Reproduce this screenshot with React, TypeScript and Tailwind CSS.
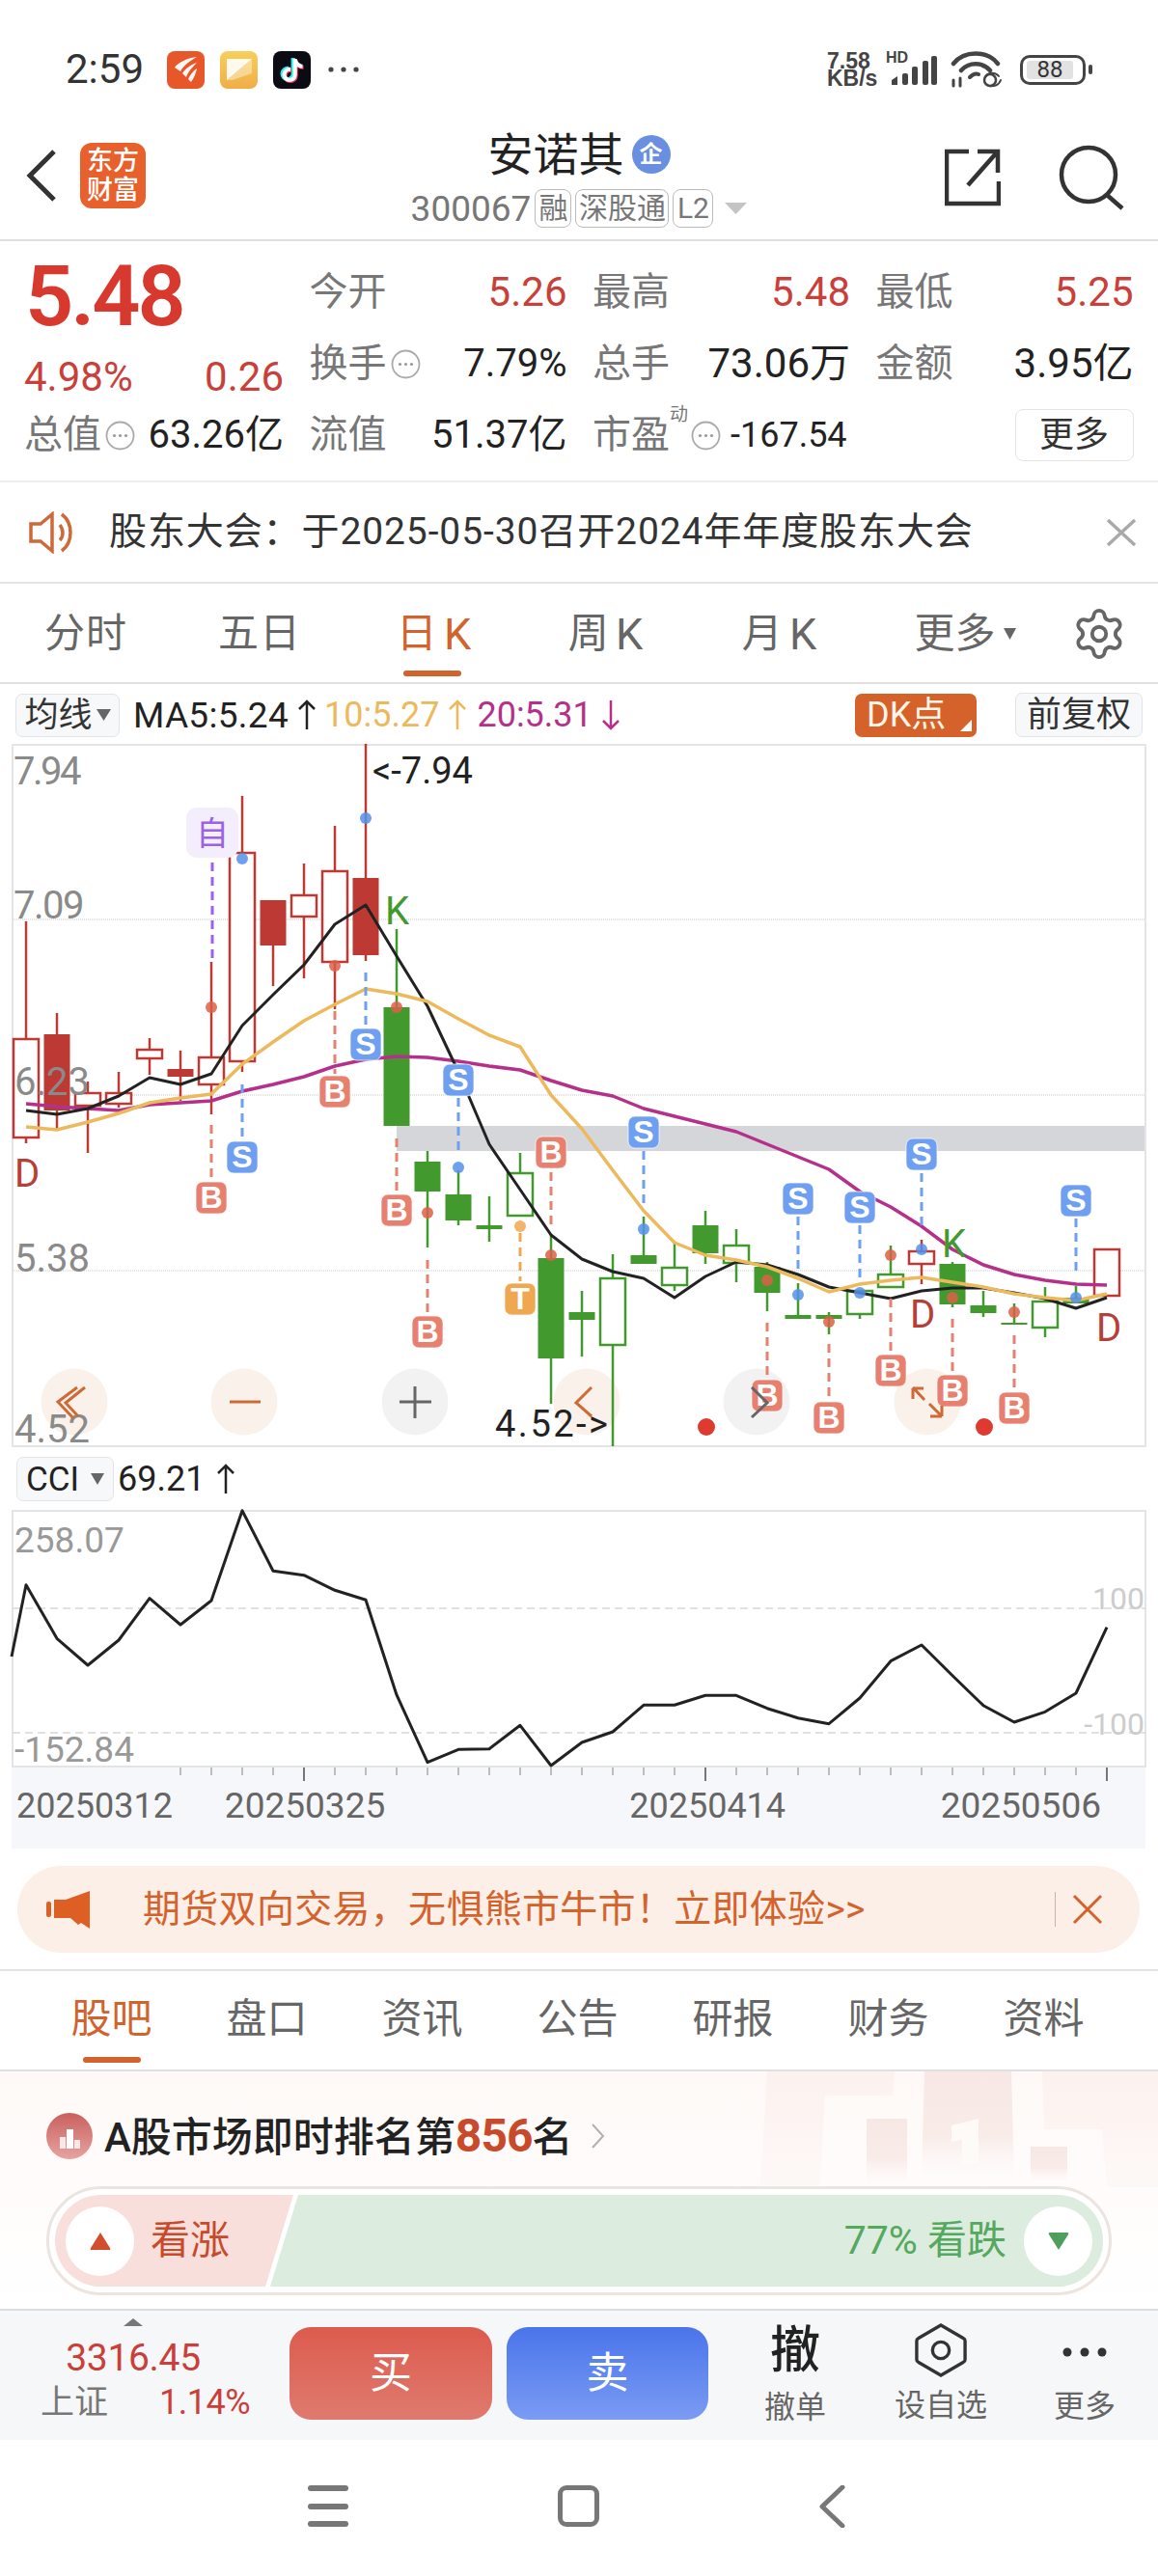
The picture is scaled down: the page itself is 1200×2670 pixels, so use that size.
import React from "react";
import { Settings } from "lucide-react";
import { FaTiktok } from "react-icons/fa6";

const RED = "#bd3a34";
const GREEN = "#429a2e";
const X = (i: number) => 27 + 32 * i;

type C = [number, "h" | "s", "r" | "g", number, number, number, number];
const candles: C[] = [
  [0, "h", "r", 957, 1079, 1181, 1187],
  [1, "s", "r", 1052, 1074, 1153, 1173],
  [2, "h", "r", 1123, 1135, 1148, 1197],
  [3, "h", "r", 1113, 1135, 1146, 1150],
  [4, "h", "r", 1078, 1090, 1099, 1116],
  [5, "s", "r", 1091, 1110, 1118, 1143],
  [6, "h", "r", 999, 1098, 1126, 1157],
  [7, "h", "r", 827, 886, 1102, 1113],
  [8, "s", "r", 935, 935, 982, 1024],
  [9, "h", "r", 897, 930, 952, 1016],
  [10, "h", "r", 858, 905, 999, 1048],
  [11, "s", "r", 773, 912, 992, 998],
  [12, "s", "g", 965, 1046, 1169, 1169],
  [13, "s", "g", 1195, 1206, 1237, 1295],
  [14, "s", "g", 1215, 1240, 1267, 1272],
  [15, "s", "g", 1242, 1272, 1276, 1289],
  [16, "h", "g", 1197, 1218, 1262, 1262],
  [17, "s", "g", 1282, 1306, 1410, 1457],
  [18, "s", "g", 1340, 1362, 1370, 1408],
  [19, "h", "g", 1302, 1327, 1396, 1501],
  [20, "s", "g", 1263, 1303, 1312, 1312],
  [21, "h", "g", 1290, 1316, 1334, 1340],
  [22, "s", "g", 1257, 1272, 1301, 1312],
  [23, "h", "g", 1276, 1293, 1311, 1331],
  [24, "s", "g", 1310, 1315, 1342, 1361],
  [25, "s", "g", 1332, 1365, 1369, 1369],
  [26, "s", "g", 1362, 1365, 1369, 1385],
  [27, "h", "g", 1340, 1340, 1364, 1369],
  [28, "h", "g", 1293, 1323, 1336, 1336],
  [29, "h", "r", 1287, 1299, 1312, 1333],
  [30, "s", "g", 1310, 1312, 1354, 1357],
  [31, "s", "g", 1340, 1355, 1363, 1367],
  [32, "s", "g", 1353, 1373, 1375, 1375],
  [33, "h", "g", 1336, 1351, 1378, 1388],
  [34, "s", "g", 1335, 1347, 1353, 1353],
  [35, "h", "r", 1297, 1297, 1345, 1345],
];

const ma5 = [1153, 1157, 1151, 1138, 1119, 1126, 1115, 1065, 1033, 1002, 960, 940, 993, 1045, 1113, 1188, 1235, 1282, 1307, 1320, 1327, 1347, 1325, 1310, 1313, 1323, 1336, 1342, 1348, 1340, 1337, 1337, 1342, 1348, 1358, 1347];
const ma10 = [1170, 1173, 1165, 1156, 1145, 1140, 1136, 1105, 1082, 1060, 1043, 1027, 1032, 1040, 1058, 1075, 1087, 1137, 1172, 1215, 1257, 1290, 1303, 1308, 1315, 1327, 1341, 1333, 1329, 1326, 1331, 1336, 1343, 1347, 1350, 1343];
const ma20 = [1146, 1149, 1151, 1153, 1147, 1145, 1143, 1133, 1126, 1118, 1107, 1100, 1097, 1098, 1102, 1107, 1111, 1122, 1132, 1138, 1151, 1159, 1167, 1175, 1188, 1201, 1214, 1237, 1253, 1273, 1297, 1313, 1323, 1329, 1333, 1334];
const pts = (a: number[]) => a.map((y, i) => `${X(i)},${y}`).join(" ");

const cciZ = [428, 595, 678, 600, 470, 552, 477, 197, 385, 398, 445, 475, 770, 980, 940, 938, 865, 990, 918, 885, 802, 802, 772, 772, 812, 842, 860, 780, 665, 615, 710, 803, 855, 823, 765, 560];
const cciPts = "12,1717 " + cciZ.map((z, i) => `${X(i)},${(1500 + z / 3).toFixed(1)}`).join(" ");

type M = { i: number; l: "B" | "S" | "T"; top: number; from: number; to: number; dot?: number };
const markers: M[] = [
  { i: 6, l: "B", top: 1227, from: 1168, to: 1225, dot: 1046 },
  { i: 7, l: "S", top: 1185, from: 1126, to: 1183, dot: 892 },
  { i: 10, l: "B", top: 1117, from: 1050, to: 1115, dot: 1003 },
  { i: 11, l: "S", top: 1068, from: 1010, to: 1066, dot: 850 },
  { i: 12, l: "B", top: 1240, from: 1182, to: 1238, dot: 1046 },
  { i: 13, l: "B", top: 1366, from: 1308, to: 1364, dot: 1259 },
  { i: 14, l: "S", top: 1105, from: 1140, to: 1195, dot: 1212 },
  { i: 16, l: "T", top: 1332, from: 1280, to: 1330, dot: 1273 },
  { i: 17, l: "B", top: 1180, from: 1217, to: 1272, dot: 1303 },
  { i: 20, l: "S", top: 1159, from: 1195, to: 1252, dot: 1276 },
  { i: 24, l: "B", top: 1432, from: 1373, to: 1430, dot: 1329 },
  { i: 25, l: "S", top: 1228, from: 1263, to: 1320, dot: 1344 },
  { i: 26, l: "B", top: 1455, from: 1395, to: 1452, dot: 1372 },
  { i: 27, l: "S", top: 1237, from: 1272, to: 1328, dot: 1342 },
  { i: 28, l: "B", top: 1406, from: 1348, to: 1404, dot: 1303 },
  { i: 29, l: "S", top: 1182, from: 1218, to: 1273, dot: 1297 },
  { i: 30, l: "B", top: 1427, from: 1369, to: 1425, dot: 1347 },
  { i: 32, l: "B", top: 1445, from: 1386, to: 1442, dot: 1362 },
  { i: 34, l: "S", top: 1230, from: 1265, to: 1320, dot: 1347 },
];
const mFill = { B: "#e8806f", S: "#6f9ff0", T: "#f0a850" };
const dotFill = { B: "#dd5f47", S: "#5590ea", T: "#f0a850" };

function Candle({ c }: { c: C }) {
  const [i, t, col, wt, bt, bb, wb] = c;
  const color = col === "r" ? RED : GREEN;
  const x = X(i);
  return (
    <g>
      {wt < bt && <line x1={x} x2={x} y1={wt} y2={bt} stroke={color} strokeWidth={2.5} />}
      {wb > bb && <line x1={x} x2={x} y1={bb} y2={wb} stroke={color} strokeWidth={2.5} />}
      {t === "s" ? (
        <rect x={x - 13.5} y={bt} width={27} height={bb - bt} fill={color} />
      ) : (
        <rect x={x - 13} y={bt} width={26} height={bb - bt} fill="#fff" stroke={color} strokeWidth={2.5} />
      )}
    </g>
  );
}

function MainChart() {
  const grid = [955, 1137, 1319];
  const circles: [number, string][] = [
    [77, "#faf1ea"],
    [253, "#faf1ea"],
    [430, "#f2f2f2"],
    [608, "#faf1ea"],
    [784, "#f2f2f2"],
    [961, "#faf1ea"],
  ];
  return (
    <svg width={1200} height={730} viewBox="0 773 1200 730" className="block overflow-visible">
      <rect x={13} y={774} width={1174} height={727} fill="#fff" stroke="#e3e4e6" strokeWidth={2} />
      {grid.map((y) => (
        <line key={y} x1={13} x2={1187} y1={y} y2={y} stroke="#c9c9c9" strokeWidth={1} strokeDasharray="1 1" />
      ))}
      <rect x={411} y={1169} width={775} height={26} fill="#d5d6da" />
      {circles.map(([x, f]) => (
        <ellipse key={x} cx={x} cy={1455} rx={34.5} ry={34.5} fill={f} />
      ))}
      {candles.map((c) => (
        <Candle key={c[0]} c={c} />
      ))}
      <polyline points={pts(ma20)} fill="none" stroke="#b5308a" strokeWidth={3.5} strokeLinejoin="round" />
      <polyline points={pts(ma5)} fill="none" stroke="#222" strokeWidth={3} strokeLinejoin="round" />
      <polyline points={pts(ma10)} fill="none" stroke="#ecb95c" strokeWidth={3.5} strokeLinejoin="round" />
      <g fill="#8a8a8a" fontSize={40}>
        <text x={14} y={815} letterSpacing={-2.5}>7.94</text>
        <text x={14} y={954} letterSpacing={-1.5}>7.09</text>
        <text x={15} y={1137}>6.23</text>
        <text x={15} y={1320}>5.38</text>
        <text x={15} y={1497}>4.52</text>
      </g>
      <text x={386} y={814} fontSize={38} fill="#222">{"<-7.94"}</text>
      <text x={513} y={1491} fontSize={38} fill="#222" letterSpacing={2.5}>{"4.52->"}</text>
      <g fontSize={40} fill="#b5403a">
        <text x={15} y={1232}>D</text>
        <text x={943} y={1378}>D</text>
        <text x={1136} y={1392}>D</text>
      </g>
      <g fontSize={40} fill={GREEN}>
        <text x={399} y={960}>K</text>
        <text x={976} y={1305}>K</text>
      </g>
      <line x1={220} x2={220} y1={896} y2={1000} stroke="#9a63e6" strokeWidth={3} strokeDasharray="9 6" />
      <rect x={193} y={839} width={54} height={52} rx={11} fill="#f3edfc" />
      <text x={220} y={878} fontSize={34} fill="#9a63e6" textAnchor="middle">自</text>
      {markers.map((m) => {
        const x = X(m.i);
        return (
          <g key={m.i}>
            <line x1={x} x2={x} y1={m.from} y2={m.to} stroke={mFill[m.l]} strokeWidth={3} strokeDasharray="9 6" />
            {m.dot && <circle cx={x} cy={m.dot} r={6} fill={dotFill[m.l]} fillOpacity={0.85} />}
            <rect x={x - 16} y={m.top} width={32} height={33} rx={7} fill={mFill[m.l]} stroke="#fff" strokeOpacity={0.7} />
            <text x={x} y={m.top + 27} fontSize={32} fontWeight={700} fill="#fff" textAnchor="middle" style={{ fontFamily: "'Liberation Sans', sans-serif" }}>
              {m.l}
            </text>
          </g>
        );
      })}
      <circle cx={732} cy={1481} r={9} fill="#de3a2f" />
      <circle cx={1020} cy={1481} r={9} fill="#de3a2f" />
      <g fill="none" strokeWidth={3}>
        <path d="M80 1440 L60 1455 L76 1472 M88 1440 L68 1456 L81 1470" stroke="#cf6a36" />
        <path d="M238 1455 H270" stroke="#cf6a36" />
        <path d="M414 1455 H447 M430 1439 V1472" stroke="#666" />
        <path d="M613 1440 L597 1456 L613 1470" stroke="#cf6a36" />
        <path d="M779 1440 L795 1456 L779 1471" stroke="#666" />
        <path d="M946 1440 L958 1453 M946 1441 V1452 M946 1441 H957 M963 1457 L976 1470 M976 1470 V1459 M976 1470 H964" stroke="#cf6a36" />
      </g>
    </svg>
  );
}

function CciChart() {
  return (
    <svg width={1200} height={267} viewBox="0 1565 1200 267" className="block absolute left-0 top-0 overflow-visible">
      <rect x={13} y={1566} width={1174} height={265} fill="#fff" stroke="#e3e4e6" strokeWidth={2} />
      <line x1={13} x2={1187} y1={1667} y2={1667} stroke="#d8d8d8" strokeWidth={1.5} strokeDasharray="8 5" />
      <line x1={13} x2={1187} y1={1796} y2={1796} stroke="#d8d8d8" strokeWidth={1.5} strokeDasharray="8 5" />
      <text x={15} y={1609} fontSize={37} fill="#999">258.07</text>
      <text x={15} y={1826} fontSize={37} fill="#999">-152.84</text>
      <text x={1186} y={1668} fontSize={32} fill="#ccc" textAnchor="end">100</text>
      <text x={1186} y={1798} fontSize={32} fill="#ccc" textAnchor="end">-100</text>
      <polyline points={cciPts} fill="none" stroke="#222" strokeWidth={3} strokeLinejoin="round" />
    </svg>
  );
}

const Dots = () => (
  <svg width={31} height={31} viewBox="0 0 31 31" className="shrink-0">
    <circle cx={15.5} cy={15.5} r={14} fill="none" stroke="#aaa" strokeWidth={1.8} />
    <g fill="#999">
      <circle cx={9.5} cy={15.5} r={1.6} />
      <circle cx={15.5} cy={15.5} r={1.6} />
      <circle cx={21.5} cy={15.5} r={1.6} />
    </g>
  </svg>
);

const Arrow = ({ color, down }: { color: string; down?: boolean }) => (
  <svg width={20} height={32} viewBox="0 0 20 32" className="shrink-0" style={{ transform: down ? "scaleY(-1)" : undefined }}>
    <path d="M10 31 V2 M2 10 L10 2 L18 10" fill="none" stroke={color} strokeWidth={2.5} />
  </svg>
);

const Tri = ({ w = 14, h = 14, color = "#666" }: { w?: number; h?: number; color?: string }) => (
  <svg width={w} height={h} viewBox="0 0 14 14" preserveAspectRatio="none" className="shrink-0">
    <path d="M0 1 H14 L7 13 Z" fill={color} />
  </svg>
);

const labelCls = "text-[40px] text-[#777] leading-none";
const redVal = "text-[42px] text-[#c93f3a] leading-none";
const darkVal = "text-[42px] text-[#222] leading-none";

function KV({ label, value, red, dots, valCls }: { label: string; value: string; red?: boolean; dots?: boolean; valCls?: string }) {
  return (
    <div className="flex items-center justify-between">
      <div className="flex items-center gap-[4px]">
        <span className={labelCls}>{label}</span>
        {dots && <Dots />}
      </div>
      <span className={valCls ?? (red ? redVal : darkVal)}>{value}</span>
    </div>
  );
}

const Tag = ({ children, w }: { children: React.ReactNode; w: string }) => (
  <span className={`${w} h-[40px] border border-[#bbb] rounded-[8px] flex items-center justify-center text-[30px] leading-none text-[#777] whitespace-nowrap`}>{children}</span>
);

function StatusBar() {
  return (
    <div className="h-[100px] shrink-0 flex items-center justify-between pl-[68px] pr-[68px] pt-[44px]">
      <div className="flex items-center">
        <span className="text-[42px] leading-none text-[#333] w-[105px]">2:59</span>
        <div className="w-[39px] h-[39px] rounded-[8px] bg-[#e8572a] flex items-center justify-center">
          <svg width={26} height={28} viewBox="0 0 26 28">
            <path d="M24 1 C15 2 5 6 1 12 L7 16 C10 10 17 5 24 1 Z M24 7 C18 9 12 13 9 18 L13 22 C15 16 20 11 24 7 Z M24 13 C21 15 17 19 15 24 L18 27 C21 23 23 18 24 13 Z" fill="#fff" fillOpacity={0.95} />
          </svg>
        </div>
        <div className="ml-[16px] w-[39px] h-[39px] rounded-[8px] bg-gradient-to-b from-[#f8cf5b] to-[#f0ae46] flex items-center justify-center">
          <svg width={26} height={22} viewBox="0 0 26 22">
            <path d="M0 0 H26 L0 22 Z" fill="#fff" fillOpacity={0.9} />
            <path d="M26 0 V15 L6 22 H0 Z" fill="#fff" fillOpacity={0.4} />
          </svg>
        </div>
        <div className="ml-[16px] w-[39px] h-[39px] rounded-[8px] bg-[#0b0b14] relative flex items-center justify-center">
          <FaTiktok size={24} color="#25f4ee" className="absolute left-[6px] top-[7px]" />
          <FaTiktok size={24} color="#fe2c55" className="absolute left-[9px] top-[9px]" />
          <FaTiktok size={24} color="#fff" className="absolute left-[7.5px] top-[8px]" />
        </div>
        <svg width={36} height={8} viewBox="0 0 36 8" className="ml-[17px]">
          <g fill="#444">
            <circle cx={4} cy={4} r={2.6} />
            <circle cx={17} cy={4} r={2.6} />
            <circle cx={30} cy={4} r={2.6} />
          </g>
        </svg>
      </div>
      <div className="flex items-center">
        <div className="w-[52px] text-[23px] leading-[18px] font-bold text-[#444] font-['Liberation_Sans',sans-serif]">
          7.58<br />KB/s
        </div>
        <div className="relative w-[52px] h-[36px] ml-[9px]">
          <span className="absolute left-0 top-[-2px] text-[16px] leading-none font-bold text-[#444] font-['Liberation_Sans',sans-serif]">HD</span>
          <svg width={48} height={31} viewBox="0 0 48 31" className="absolute left-[5px] top-[4px]">
            <g fill="#444">
              <path d="M1 30 V25 L7 21 V30 Z" />
              <rect x={12} y={18} width={6} height={12} rx={2} />
              <rect x={22} y={11} width={6} height={19} rx={2} />
              <rect x={33} y={5} width={6} height={25} rx={2} />
              <rect x={42} y={0} width={6} height={30} rx={2} />
            </g>
          </svg>
        </div>
        <svg width={54} height={38} viewBox="0 0 54 38" className="ml-[15px]">
          <g fill="none" stroke="#444" strokeLinecap="round">
            <path d="M3 13 C14 -1 38 -1 49 13" strokeWidth={4.5} />
            <path d="M11 20 C19 11 33 11 41 20" strokeWidth={4.5} />
            <path d="M20 27 C24 23 27 23 29 24" strokeWidth={4} />
            <circle cx={41} cy={30} r={6} strokeWidth={2.5} />
            <path d="M36 27 C38 22 46 21 50 26 M52 30 C50 36 44 37 40 36" strokeWidth={2} />
            <path d="M3 30 V36 M10 28 V36" strokeWidth={3} />
          </g>
        </svg>
        <div className="ml-[18px] w-[68px] h-[31px] border-[3px] border-[#444] rounded-[10px] flex items-center pl-[4px] py-[3px]">
          <div className="w-[48px] h-full rounded-[3px] bg-[#e2e2e2] flex items-center justify-center text-[24px] leading-none text-[#333]">88</div>
        </div>
        <div className="ml-[3px] w-[4px] h-[10px] rounded-[2px] bg-[#444]" />
      </div>
    </div>
  );
}

function Header() {
  return (
    <div className="h-[150px] shrink-0 flex items-start justify-between border-b-2 border-[#dedede]">
      <div className="w-[250px] flex items-center pt-[48px] pl-[27px]">
        <svg width={32} height={56} viewBox="0 0 32 56">
          <path d="M29 3 L4 28 L29 53" fill="none" stroke="#333" strokeWidth={5} />
        </svg>
        <div className="ml-[24px] w-[68px] h-[68px] rounded-[12px] bg-[#e8602c] flex flex-col items-center justify-center text-white text-[27px] leading-[30px] font-medium">
          <span>东方</span>
          <span>财富</span>
        </div>
      </div>
      <div className="flex flex-col items-center pt-[36px]">
        <div className="flex items-center h-[48px]">
          <span className="text-[47px] leading-none text-[#222]">安诺其</span>
          <span className="ml-[8px] w-[40px] h-[40px] rounded-full bg-[#6a8fe0] text-white text-[24px] leading-none font-bold flex items-center justify-center">企</span>
        </div>
        <div className="flex items-center mt-[12px] gap-[4px]">
          <span className="text-[37px] leading-none text-[#777]">300067</span>
          <Tag w="w-[38px]">融</Tag>
          <Tag w="w-[97px]">深股通</Tag>
          <Tag w="w-[42px]">L2</Tag>
          <span className="ml-[8px]"><Tri w={23} h={14} color="#c4c4c4" /></span>
        </div>
      </div>
      <div className="w-[250px] flex items-center justify-end pt-[50px] pr-[33px] gap-[60px]">
        <svg width={58} height={60} viewBox="0 0 58 60">
          <g fill="none" stroke="#333" strokeWidth={4.5}>
            <path d="M25 3 H2 V57 H56 V34" />
            <path d="M24 38 L54 4 M34 3 H55 V25" />
          </g>
        </svg>
        <svg width={70} height={68} viewBox="0 0 70 68">
          <g fill="none" stroke="#333" strokeWidth={4.5}>
            <circle cx={31} cy={31} r={28} />
            <path d="M50 52 L66 66" />
          </g>
        </svg>
      </div>
    </div>
  );
}

function Quote() {
  return (
    <div className="h-[250px] shrink-0 border-b-2 border-[#eee] pt-[16px] pl-[25px] grid grid-cols-[269px_267px_267px_267px] grid-rows-[74px_74px_74px] gap-x-[26.5px]">
      <div className="row-span-2 flex flex-col">
        <span className="text-[88px] leading-none font-semibold text-[#d8392f] tracking-[-3px] mt-[-3px] ml-[1px]">5.48</span>
        <div className="flex justify-between mt-[19px] text-[42px] leading-none text-[#c93f3a]">
          <span>4.98%</span>
          <span>0.26</span>
        </div>
      </div>
      <KV label="今开" value="5.26" red />
      <KV label="最高" value="5.48" red />
      <KV label="最低" value="5.25" red />
      <KV label="换手" value="7.79%" dots valCls="text-[40px] text-[#222] leading-none" />
      <KV label="总手" value="73.06万" />
      <KV label="金额" value="3.95亿" />
      <KV label="总值" value="63.26亿" dots valCls="text-[40px] text-[#222] leading-none" />
      <KV label="流值" value="51.37亿" valCls="text-[40px] text-[#222] leading-none" />
      <div className="flex items-center relative">
        <span className={labelCls}>市盈</span>
        <span className="text-[19px] text-[#777] leading-none self-start mt-[6px] w-[22px]">动</span>
        <Dots />
        <span className="ml-[10px] text-[36px] text-[#222] leading-none">-167.54</span>
      </div>
      <div className="flex items-center justify-end">
        <div className="w-[123px] h-[54px] border border-[#e4e4e4] rounded-[8px] flex items-center justify-center text-[36px] leading-none text-[#333]">更多</div>
      </div>
    </div>
  );
}

function Notice() {
  return (
    <div className="h-[105px] shrink-0 border-b-2 border-[#e4e4e4] flex items-center pl-[30px] pr-[22px]">
      <svg width={52} height={44} viewBox="0 0 52 44" className="shrink-0">
        <g fill="none" stroke="#cd6a3a" strokeWidth={3.5}>
          <path d="M2 13 H12 L24 3 V41 L12 31 H2 Z" />
          <path d="M32 14 C36 19 36 26 32 30" />
          <path d="M34 3 C46 12 46 32 34 41" />
        </g>
      </svg>
      <span className="ml-[31px] text-[39px] tracking-[0.9px] leading-none text-[#333] whitespace-nowrap">股东大会：于2025-05-30召开2024年年度股东大会</span>
      <svg width={32} height={30} viewBox="0 0 32 30" className="ml-auto">
        <path d="M2 2 L30 28 M30 2 L2 28" fill="none" stroke="#a9a9a9" strokeWidth={3.5} />
      </svg>
    </div>
  );
}

const KTab = ({ w, active, children }: { w: string; active?: boolean; children: React.ReactNode }) => (
  <div className={`${w} relative flex items-center justify-center text-[42px] leading-none tracking-[1px] pt-[2px] ${active ? "text-[#d1632c]" : "text-[#666]"}`}>
    {children}
    {active && <div className="absolute bottom-[6px] left-[58px] w-[60px] h-[6px] rounded-[3px] bg-[#d1632c]" />}
  </div>
);
const K = () => <span className="ml-[6px] text-[45px]">K</span>;

function KTabs() {
  return (
    <div className="h-[104px] shrink-0 border-b-2 border-[#e0e0e0] flex items-stretch">
      <KTab w="w-[178px]">分时</KTab>
      <KTab w="w-[182px]">五日</KTab>
      <KTab w="w-[180px]" active>日<K /></KTab>
      <KTab w="w-[176px]">周<K /></KTab>
      <KTab w="w-[184px]">月<K /></KTab>
      <div className="w-[200px] flex items-center justify-center gap-[8px] text-[42px] leading-none text-[#666] pt-[2px]">
        更多
        <Tri w={13} h={14} />
      </div>
      <div className="w-[78px] flex items-center justify-center pt-[1px]">
        <Settings size={58} color="#666" strokeWidth={1.6} />
      </div>
    </div>
  );
}

function Ma() {
  return (
    <div className="h-[62px] shrink-0 flex items-center pl-[16px] pr-[16px] pt-[2px]">
      <div className="w-[108px] h-[45px] bg-[#f7f8fa] border border-[#e3e4e8] rounded-[7px] flex items-center justify-center gap-[4px] text-[35px] leading-none text-[#333]">
        均线
        <Tri w={15} h={14} />
      </div>
      <span className="ml-[14px] text-[37px] tracking-[0.3px] leading-none text-[#222]">MA5:5.24</span>
      <span className="ml-[9px]"><Arrow color="#222" /></span>
      <span className="ml-[8px] text-[36px] leading-none text-[#ecb95c]">10:5.27</span>
      <span className="ml-[9px]"><Arrow color="#ecb95c" /></span>
      <span className="ml-[10px] text-[36px] leading-none text-[#b5308a]">20:5.31</span>
      <span className="ml-[9px]"><Arrow color="#b5308a" down /></span>
      <div className="ml-auto w-[126px] h-[45px] rounded-[7px] bg-[#d5622b] relative flex items-center pl-[12px] text-[36px] leading-none text-[#fff6ea]">
        DK点
        <svg width={12} height={12} viewBox="0 0 12 12" className="absolute right-[5px] bottom-[6px]">
          <path d="M0 12 L12 0 V12 Z" fill="#fff" />
        </svg>
      </div>
      <div className="ml-[40px] w-[132px] h-[46px] bg-[#f7f8fa] border border-[#e3e4e8] rounded-[7px] flex items-center justify-center text-[36px] leading-none text-[#333]">前复权</div>
    </div>
  );
}

function CciHead() {
  return (
    <div className="h-[64px] shrink-0 flex items-center pl-[17px]">
      <div className="w-[101px] h-[46px] bg-[#f7f8fa] border border-[#e3e4e8] rounded-[7px] flex items-center justify-center gap-[12px] text-[35px] leading-none text-[#222]">
        CCI
        <Tri w={14} h={14} />
      </div>
      <span className="ml-[4px] text-[36px] leading-none text-[#222]">69.21</span>
      <span className="ml-[12px]"><Arrow color="#222" /></span>
    </div>
  );
}

function Dates() {
  return (
    <div className="relative shrink-0 h-[351px]">
      <CciChart />
      <div className="absolute left-[12px] top-[267px] w-[1175px] h-[84px] bg-[#f6f7fa]" />
      <svg width={1200} height={20} viewBox="0 1831 1200 20" className="absolute left-0 top-[266px]">
        {Array.from({ length: 31 }, (_, k) => k + 5).map((i) => {
          const major = i === 9 || i === 22 || i === 35;
          return <line key={i} x1={X(i)} x2={X(i)} y1={1832} y2={major ? 1846 : 1840} stroke={major ? "#777" : "#aaa"} strokeWidth={major ? 2 : 1.5} />;
        })}
      </svg>
      <div className="absolute left-[17px] top-[289px] w-[1124px] flex text-[36px] leading-[36px] text-[#666]">
        <span>20250312</span>
        <span className="ml-[54px] text-[37px]">20250325</span>
        <span className="ml-[253px]">20250414</span>
        <span className="ml-auto text-[37px]">20250506</span>
      </div>
    </div>
  );
}

function Banner() {
  return (
    <div className="h-[127px] shrink-0 border-b-2 border-[#e2e3e5] pt-[18px] pl-[18px] pr-[19px]">
      <div className="h-[90px] rounded-[45px] bg-[#fcefe7] flex items-center pl-[30px] pr-[38px]">
        <svg width={46} height={40} viewBox="0 0 46 40" className="shrink-0">
          <path d="M45 1 V40 L36 34 L33 36 L25 29 H8 V10 H20 Z" fill="#dd5f24" />
          <rect x={0} y={12} width={5} height={16} rx={2} fill="#dd5f24" />
        </svg>
        <span className="ml-[54px] text-[39px] tracking-[0.3px] leading-none text-[#d4622c] whitespace-nowrap">期货双向交易，无惧熊市牛市！立即体验&gt;&gt;</span>
        <div className="ml-auto w-[1px] h-[36px] bg-[#c9b5a8]" />
        <svg width={32} height={32} viewBox="0 0 32 32" className="ml-[17px] shrink-0">
          <path d="M2 2 L30 30 M30 2 L2 30" fill="none" stroke="#d4622c" strokeWidth={3} />
        </svg>
      </div>
    </div>
  );
}

function InfoTabs() {
  const tabs = ["股吧", "盘口", "资讯", "公告", "研报", "财务", "资料"];
  return (
    <div className="h-[104px] shrink-0 border-b-2 border-[#e0e0e0] flex pl-[35px]">
      {tabs.map((t, i) => (
        <div key={t} className={`w-[161px] relative flex items-center justify-center text-[42px] leading-none pb-[2px] ${i === 0 ? "text-[#d1632c]" : "text-[#666]"}`}>
          {t}
          {i === 0 && <div className="absolute bottom-[7px] left-[51px] w-[60px] h-[6px] rounded-[3px] bg-[#d1632c]" />}
        </div>
      ))}
    </div>
  );
}

function Sentiment() {
  return (
    <div className="h-[246px] shrink-0 relative bg-gradient-to-b from-[#fef9f7] to-white px-[48px]">
      <svg width={420} height={122} viewBox="0 0 420 122" className="absolute right-0 top-0">
        <defs>
          <linearGradient id="deco" x1="0" y1="0" x2="0" y2="1">
            <stop offset="0" stopColor="#f7e8e5" />
            <stop offset="0.6" stopColor="#f8ebe8" />
            <stop offset="1" stopColor="#fef9f7" stopOpacity={0.2} />
          </linearGradient>
          <linearGradient id="deco2" x1="0" y1="0" x2="0" y2="1">
            <stop offset="0" stopColor="#fcf1ee" />
            <stop offset="1" stopColor="#fdf5f3" stopOpacity={0.5} />
          </linearGradient>
        </defs>
        <path d="M15 0 H147 L145 25 H75 L70 118 H8 Z" fill="url(#deco2)" />
        <rect x={118} y={49} width={42} height={68} fill="url(#deco)" />
        <path d="M178 0 H268 L271 110 H175 Z" fill="url(#deco)" />
        <path d="M206 56 L234 49 V96 H217 V71 L206 73 Z" fill="#fefaf8" />
        <path d="M300 0 H420 V120 H367 L362 60 H302 Z" fill="url(#deco2)" />
        <rect x={288} y={78} width={38} height={36} fill="url(#deco)" />
      </svg>
      <div className="relative h-[119px] flex items-center pt-[14px]">
        <div className="w-[48px] h-[48px] rounded-full bg-gradient-to-b from-[#c9605f] to-[#e6a3a1] flex items-end justify-center pb-[11px] gap-[1px]">
          <span className="w-[6px] h-[12px] bg-white/80" />
          <span className="w-[7px] h-[20px] bg-white" />
          <span className="w-[6px] h-[9px] bg-white/80" />
        </div>
        <span className="ml-[12px] text-[42px] leading-none font-medium text-[#222] whitespace-nowrap">A股市场即时排名第<span className="text-[48px] text-[#c9492b] font-bold tracking-[-1px]">856</span>名</span>
        <svg width={16} height={28} viewBox="0 0 16 28" className="ml-[18px]">
          <path d="M2 2 L13 14 L2 26" fill="none" stroke="#b0b0b0" strokeWidth={2} />
        </svg>
      </div>
      <div className="relative w-[1104px] h-[113px] rounded-full border-[3px] border-[#ebe4df] p-[6px] bg-white">
        <div className="relative h-full rounded-full overflow-hidden bg-[#f9dfdc]">
          <div className="absolute inset-0 bg-white [clip-path:polygon(247px_0,100%_0,100%_100%,218px_100%)]" />
          <div className="absolute inset-0 bg-[#dcecde] [clip-path:polygon(252px_0,100%_0,100%_100%,223px_100%)]" />
          <div className="relative h-full flex items-center justify-between px-[11px]">
            <div className="flex items-center">
              <div className="w-[71px] h-[72px] rounded-full bg-white flex items-center justify-center">
                <svg width={26} height={22} viewBox="0 0 26 22"><path d="M13 2 L23 18 Q24 20 22 20 H4 Q2 20 3 18 Z" fill="#d14f2e" /></svg>
              </div>
              <span className="ml-[17px] text-[41px] leading-none text-[#c9492b]">看涨</span>
            </div>
            <div className="flex items-center">
              <span className="text-[41px] leading-none text-[#55a85e]">77% 看跌</span>
              <div className="ml-[18px] w-[71px] h-[72px] rounded-full bg-white flex items-center justify-center">
                <svg width={26} height={22} viewBox="0 0 26 22"><path d="M13 20 L23 4 Q24 2 22 2 H4 Q2 2 3 4 Z" fill="#4f9f5c" /></svg>
              </div>
            </div>
          </div>
        </div>
      </div>
    </div>
  );
}

function BottomBar() {
  return (
    <div className="h-[136px] shrink-0 border-t-2 border-[#dcdde0] bg-[#f6f7f9] flex items-start">
      <div className="w-[300px] shrink-0 pl-[42px] pr-[41px] flex flex-col">
        <div className="flex justify-center pr-[25px] mt-[8px]">
          <svg width={20} height={8} viewBox="0 0 20 8"><path d="M10 0 L20 8 H0 Z" fill="#777" /></svg>
        </div>
        <div className="mt-[13px] pr-[25px] text-[39px] leading-[40px] text-[#c93f3a] text-center tracking-[-0.3px]">3316.45</div>
        <div className="mt-[8px] flex justify-between items-center">
          <span className="text-[35px] leading-none text-[#777]">上证</span>
          <span className="text-[36px] leading-none text-[#c93f3a] tracking-[-0.5px]">1.14%</span>
        </div>
      </div>
      <div className="mt-[17px] w-[210px] shrink-0 h-[96px] rounded-[22px] bg-gradient-to-b from-[#dc5b4e] to-[#df7a6e] flex items-center justify-center text-[44px] leading-none text-white">买</div>
      <div className="mt-[17px] ml-[15px] w-[209px] shrink-0 h-[96px] rounded-[22px] bg-gradient-to-b from-[#4a74ea] to-[#7b9bf3] flex items-center justify-center text-[44px] leading-none text-white">卖</div>
      <div className="w-[180px] shrink-0 flex flex-col items-center">
        <div className="h-[52px] mt-[16px] text-[52px] leading-none text-[#222] font-medium">撤</div>
        <div className="mt-[16px] text-[32px] leading-none text-[#666]">撤单</div>
      </div>
      <div className="w-[122px] shrink-0 flex flex-col items-center">
        <svg width={54} height={58} viewBox="0 0 56 60" className="mt-[12px]">
          <path d="M28 3 L52 17 Q54 18 54 20 V40 Q54 42 52 43 L28 57 L4 43 Q2 42 2 40 V20 Q2 18 4 17 Z" fill="none" stroke="#333" strokeWidth={3.5} />
          <circle cx={28} cy={30} r={9} fill="none" stroke="#333" strokeWidth={3.5} />
        </svg>
        <div className="mt-[12px] text-[32px] leading-none text-[#666]">设自选</div>
      </div>
      <div className="w-[164px] shrink-0 pl-[12px] flex flex-col items-center">
        <svg width={48} height={12} viewBox="0 0 48 12" className="mt-[37px]">
          <g fill="#333">
            <circle cx={6} cy={6} r={4.5} />
            <circle cx={24} cy={6} r={4.5} />
            <circle cx={42} cy={6} r={4.5} />
          </g>
        </svg>
        <div className="mt-[34px] text-[32px] leading-none text-[#666]">更多</div>
      </div>
    </div>
  );
}

function SysNav() {
  return (
    <div className="flex-1 flex items-start pt-[47px] pl-[319px]">
      <div className="w-[42px] h-[43px] flex flex-col justify-between">
        <div className="h-[6px] rounded-[3px] bg-[#777]" />
        <div className="h-[6px] rounded-[3px] bg-[#777]" />
        <div className="h-[6px] rounded-[3px] bg-[#777]" />
      </div>
      <div className="ml-[217px] w-[43px] h-[43px] border-[5px] border-[#777] rounded-[9px]" />
      <svg width={28} height={44} viewBox="0 0 28 44" className="ml-[227px]">
        <path d="M25 2 L4 22 L25 42" fill="none" stroke="#777" strokeWidth={5} strokeLinecap="round" strokeLinejoin="round" />
      </svg>
    </div>
  );
}

export default function App() {
  return (
    <div className="w-[1200px] h-[2670px] bg-white flex flex-col overflow-hidden font-['Roboto','Noto_Sans_CJK_SC',sans-serif]">
      <StatusBar />
      <Header />
      <Quote />
      <Notice />
      <KTabs />
      <Ma />
      <div className="shrink-0 h-[730px]"><MainChart /></div>
      <CciHead />
      <Dates />
      <Banner />
      <InfoTabs />
      <Sentiment />
      <BottomBar />
      <SysNav />
    </div>
  );
}
